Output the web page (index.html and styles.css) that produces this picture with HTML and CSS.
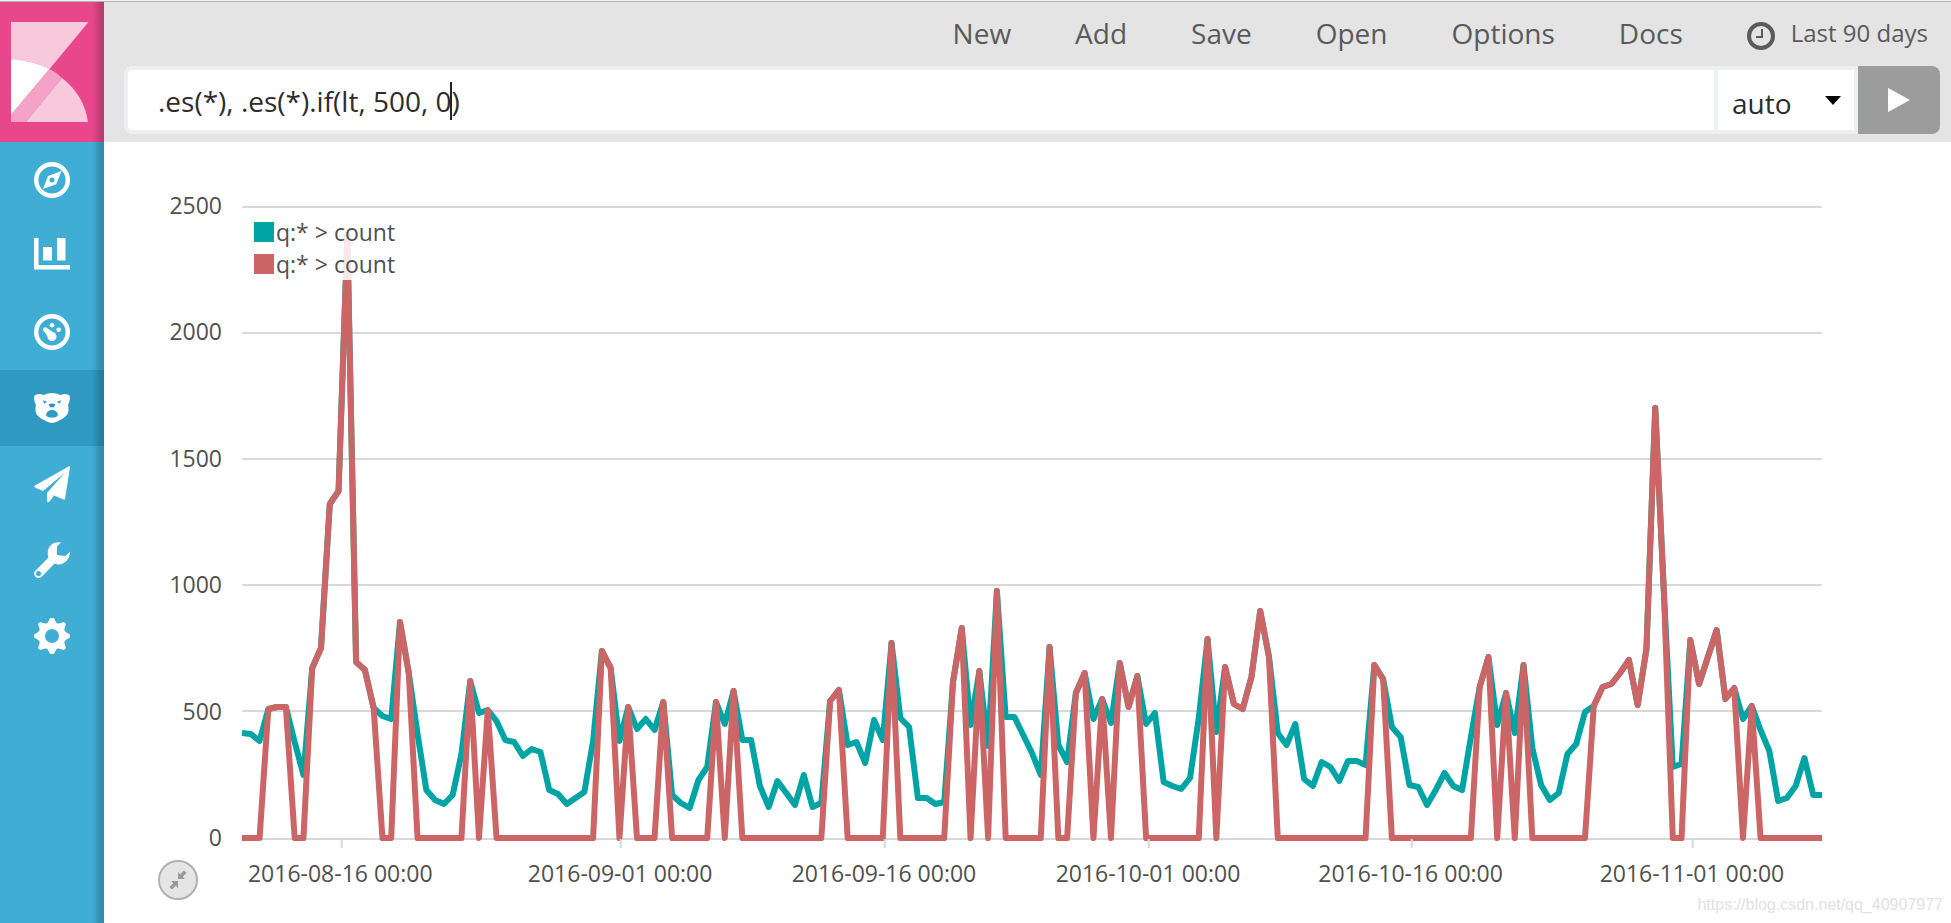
FILE: index.html
```html
<!DOCTYPE html>
<html lang="en">
<head>
<meta charset="utf-8">
<title>Timelion - Kibana</title>
<link rel="stylesheet" href="styles.css">
</head>
<body>
<div class="app">
  <nav class="sidebar" aria-label="Applications">
    <a class="logo" href="#" aria-label="Kibana">
      <svg viewBox="0 0 104 140" aria-hidden="true">
        <path fill="#f8c8dd" d="M11 20H88.500L49.500 67Q32 58 11 58Z"/>
        <path fill="#fff" d="M11 57.500Q32 58 49.500 67L11 113Z"/>
        <path fill="#f3a3c7" d="M49.500 67Q56 70 62 76L26 120H11V113Z"/>
        <path fill="#f8c8dd" d="M62 76Q84 93 88 120H26Z"/>
      </svg>
    </a>
    <a class="nav-item" href="#" aria-label="Discover">
      <svg viewBox="0 0 36 36" aria-hidden="true"><circle cx="18" cy="18" r="15.800" fill="none" stroke="#fff" stroke-width="4.400"/><path fill="#fff" fill-rule="evenodd" d="M27.500 9L22.300 22.300L9 27L14 14ZM18 15.500A2.500 2.500 0 1 0 18 20.500A2.500 2.500 0 1 0 18 15.500Z"/></svg>
    </a>
    <a class="nav-item" href="#" aria-label="Visualize">
      <svg viewBox="0 0 36 36" aria-hidden="true"><path fill="#fff" d="M0 0H4.500V27H36V31.500H0ZM9 9H18V22.500H9ZM23 0H31.500V22.500H23Z"/></svg>
    </a>
    <a class="nav-item" href="#" aria-label="Dashboard">
      <svg viewBox="0 0 36 36" aria-hidden="true"><circle cx="18" cy="18" r="15.800" fill="none" stroke="#fff" stroke-width="4.400"/><g fill="#fff"><circle cx="18" cy="11.300" r="2.300"/><circle cx="24.700" cy="15.700" r="2.300"/><circle cx="18" cy="22.500" r="4.500"/><path d="M9.300 16.500A2.200 2.200 0 0 1 12.700 13.800L21 19.500L15.500 25Z"/></g></svg>
    </a>
    <a class="nav-item active" href="#" aria-label="Timelion" aria-current="page">
      <svg viewBox="0 0 36 36" aria-hidden="true"><path fill="#fff" fill-rule="evenodd" d="M1 5Q5 3 9.500 5Q18 1 26.500 5Q31 3 35 5Q37 7 35 13L34 15Q36 22 32 26Q29 29 26 30Q22 33 18 33Q14 33 10 30Q7 29 4 26Q0 22 2 15L1 13Q-1 7 1 5ZM12 25Q13 20 18 20Q23 20 24 25Q24 26 22 27Q18 28 14 27Q12 26 12 25ZM14.500 14.500Q18 12.500 21.500 14.500Q21 17 18 17.500Q15 17 14.500 14.500ZM9 10L13 12Q12 13.500 10 13ZM27 10L23 12Q24 13.500 26 13Z"/></svg>
    </a>
    <a class="nav-item" href="#" aria-label="Canvas">
      <svg viewBox="0 0 36 36" aria-hidden="true"><path fill="#fff" d="M35 .3Q36 0 36 1L31 33Q30.700 34 29.500 33.500L20 29.500L15.500 35.500Q13 37 13 34.500V27L30.500 7L9 25L1 21.500Q-.8 20.500 1 19.500Z"/></svg>
    </a>
    <a class="nav-item" href="#" aria-label="Dev Tools">
      <svg viewBox="0 0 36 36" aria-hidden="true"><path fill="#fff" fill-rule="evenodd" d="M27 .5Q17 -1 14 8Q13 12 14.500 15.500L1.500 28.500Q-1 31 1 34.500Q4.500 37.500 8 34.500L20.500 21.500Q27 24 32 19.500Q36 15.500 36 9.500L31.500 14L23 13V4.500ZM4.500 29A2.500 2.500 0 1 0 4.500 34A2.500 2.500 0 1 0 4.500 29Z"/></svg>
    </a>
    <a class="nav-item" href="#" aria-label="Management">
      <svg viewBox="0 0 36 36" aria-hidden="true"><path fill="#fff" fill-rule="evenodd" d="M16 0H20Q22 5 23.500 5.500Q25 5.500 30 4L32 6Q30 11 30.500 12.500Q31 14 36 16.500V19.500Q31 22 30.500 23.500Q30 25 32 30L30 32Q25 30 23.500 30.500Q22 31 20 36H16Q14 31 12.500 30.500Q11 30 6 32L4 30Q6 25 5.500 23.500Q5 22 0 19.500V16.500Q5 14 5.500 12.500Q6 11 4 6L6 4Q11 5.500 12.500 5.500Q14 5 16 0ZM18 11A7 7 0 1 0 18 25A7 7 0 1 0 18 11Z"/></svg>
    </a>
  </nav>

  <div class="page">
    <header class="topbar">
      <div class="menu">
        <button type="button">New</button>
        <button type="button">Add</button>
        <button type="button">Save</button>
        <button type="button">Open</button>
        <button type="button">Options</button>
        <button type="button">Docs</button>
        <button type="button" class="time">
          <svg viewBox="0 0 28 28" aria-hidden="true"><circle cx="14" cy="14" r="12" fill="none" stroke="#5a5a5a" stroke-width="4"/><path d="M15 7V15H9" fill="none" stroke="#5a5a5a" stroke-width="2"/></svg>
          <span>Last 90 days</span>
        </button>
      </div>
      <form class="search">
        <div class="expression">
          <input type="text" value=".es(*), .es(*).if(lt, 500, 0)" aria-label="Timelion expression">
          <span class="caret"></span>
        </div>
        <div class="interval">
          <select aria-label="Interval"><option>auto</option></select>
        </div>
        <button type="button" class="run" aria-label="Run">
          <svg viewBox="0 0 22 24" aria-hidden="true"><path fill="#fff" d="M0 0L22 12L0 24Z"/></svg>
        </button>
      </form>
    </header>

    <main class="chart">
      <div class="y-axis">
        <span>2500</span><span>2000</span><span>1500</span><span>1000</span><span>500</span><span>0</span>
      </div>
      <div class="plot">
        <svg class="lines" viewBox="0 0 180 632" preserveAspectRatio="none" role="img" aria-label="Event count over the last 90 days">
          <path class="grid" d="M0 0H180M0 126H180M0 252H180M0 378H180M0 504H180M0 632H180"/>
          <polyline id="all" class="series all"/>
          <polyline id="filtered" class="series filtered"/>
        </svg>
        <div class="legend">
          <div class="legend-row"><i class="swatch teal"></i>q:* &gt; count</div>
          <div class="legend-row"><i class="swatch red"></i>q:* &gt; count</div>
        </div>
      </div>
      <button type="button" class="collapse" aria-label="Exit full screen">
        <svg viewBox="0 0 16 16" aria-hidden="true"><path fill="#999" d="M8 0L10.300 2.300L14 -1.500L16.500 1L12.700 4.700L15 7H8ZM8 16L5.700 13.700L2 17.500L-.5 15L3.300 11.300L1 9H8Z"/></svg>
      </button>
      <div class="x-axis">
        <span style="left:6.220%">2016-08-16 00:00</span>
        <span style="left:23.930%">2016-09-01 00:00</span>
        <span style="left:40.630%">2016-09-16 00:00</span>
        <span style="left:57.340%">2016-10-01 00:00</span>
        <span style="left:73.960%">2016-10-16 00:00</span>
        <span style="left:91.770%">2016-11-01 00:00</span>
      </div>
    </main>
    <footer class="watermark">https://blog.csdn.net/qq_40907977</footer>
  </div>
</div>
<script src="chart.js"></script>
</body>
</html>
```

FILE: styles.css
```css
* { box-sizing: border-box; }

body {
  margin: 0;
  font-family: "Open Sans", "Noto Sans", sans-serif;
  color: #505050;
  background: #fff;
}

button, input, select { font: inherit; color: inherit; }

button {
  padding: 0;
  border: 0;
  background: none;
}

.app {
  display: flex;
  min-height: 100vh;
  border-top: 1px solid #eef2f2;
}

.sidebar {
  flex: none;
  width: 104px;
  border-top: 1px solid #b0b4b4;
  background: linear-gradient(to left, rgba(0, 0, 0, 0.2), rgba(0, 0, 0, 0.17) 4px, transparent 12px), #3fadd4;
}

.logo {
  display: block;
  height: 140px;
  background: linear-gradient(to left, rgba(0, 0, 0, 0.2), rgba(0, 0, 0, 0.17) 4px, transparent 12px), #e8488b;
}

.logo svg { display: block; width: 104px; height: 140px; }

.nav-item {
  display: flex;
  align-items: center;
  justify-content: center;
  height: 76px;
}

.nav-item.active {
  background: linear-gradient(to left, rgba(0, 0, 0, 0.2), rgba(0, 0, 0, 0.17) 4px, transparent 12px), #2f99c2;
}

.nav-item svg { width: 36px; height: 36px; overflow: visible; }

.page {
  flex: 1;
  min-width: 0;
  display: flex;
  flex-direction: column;
}

.topbar {
  border-top: 1px solid #b0b4b4;
  padding: 0 11px 8px 20px;
  background: #e4e4e4;
}

.menu {
  display: flex;
  justify-content: flex-end;
  align-items: center;
  gap: 64px;
  height: 62px;
  margin-bottom: 2px;
  padding-right: 12px;
  font-size: 28px;
  color: #5a5a5a;
}

.time {
  display: flex;
  align-items: center;
  gap: 16px;
  font-size: 24px;
}

.time svg { width: 28px; height: 28px; margin-top: 6px; }
.time span { padding-bottom: 2px; }

.search {
  display: flex;
  height: 68px;
  font-size: 28px;
  color: #2d2d2d;
}

.expression {
  position: relative;
  flex: 1;
  border: 4px solid #ecf0f1;
  border-radius: 8px 0 0 8px;
  background: #fff;
}

.expression input {
  display: block;
  width: 100%;
  height: 100%;
  padding: 2px 30px 0;
  border: 0;
  outline: 0;
  background: transparent;
}

.caret {
  position: absolute;
  left: 322px;
  top: 12px;
  width: 2px;
  height: 38px;
  background: #222;
}

.interval {
  position: relative;
  width: 140px;
  border: 4px solid #ecf0f1;
  border-left: 0;
  background: #fff;
}

.interval select {
  display: block;
  width: 100%;
  height: 100%;
  padding: 6px 14px 0;
  border: 0;
  appearance: none;
  background: transparent;
}

.interval::after {
  content: "";
  position: absolute;
  right: 13px;
  top: 26px;
  border: 8px solid transparent;
  border-top: 9px solid #000;
  border-bottom: 0;
}

.run {
  display: flex;
  align-items: center;
  justify-content: center;
  width: 82px;
  border-radius: 0 8px 8px 0;
  background: #9c9c9c;
}

.run svg { width: 22px; height: 24px; }

.chart {
  flex: 1;
  display: grid;
  grid-template-columns: 64px 1fr;
  grid-template-rows: 1fr 60px;
  column-gap: 20px;
  padding: 65px 129px 0 54px;
  font-size: 23px;
  line-height: 32px;
}

.y-axis {
  display: flex;
  flex-direction: column;
  justify-content: space-between;
  margin: -18px 0 -14px;
  text-align: right;
}

.plot { position: relative; min-height: 0; }

.lines {
  position: absolute;
  inset: 0;
  width: 100%;
  height: 100%;
  overflow: visible;
}

.grid, .series { fill: none; vector-effect: non-scaling-stroke; }
.grid { stroke: #d8d8d8; stroke-width: 2px; }
.series { stroke-width: 6px; stroke-linejoin: round; }
.all { stroke: #01a4a4; }
.filtered { stroke: #c66; }

.legend {
  position: absolute;
  left: 12px;
  top: 9px;
  background: rgba(255, 255, 255, 0.85);
}

.legend-row {
  display: flex;
  align-items: center;
  gap: 2px;
  height: 32px;
}

.swatch { width: 20px; height: 20px; }
.teal { background: #01a4a4; }
.red { background: #c66; }

.collapse {
  align-self: start;
  display: grid;
  place-items: center;
  width: 40px;
  height: 40px;
  margin-top: 21px;
  border: 2px solid #b0b0b0;
  border-radius: 50%;
  background: #e5e5e5;
}

.collapse svg { width: 16px; height: 16px; overflow: visible; }

.x-axis { position: relative; }

.x-axis span {
  position: absolute;
  top: 0;
  padding-top: 18px;
  white-space: nowrap;
  transform: translateX(-50%);
}

.x-axis span::before {
  content: "";
  position: absolute;
  left: 50%;
  top: 0;
  width: 2px;
  height: 9px;
  background: #d8d8d8;
}

.watermark {
  height: 24px;
  padding-right: 8px;
  text-align: right;
  font: 16px/12px "Liberation Sans", Arial, sans-serif;
  color: #e2e2e2;
}
```

FILE: chart.js
```js
// Vertical plot position of each half-day bucket, measured down from TOP.
const TOP = 207;
const BASE = 838;
const THRESHOLD = 711.9;

const buckets = [
  733, 734, 741, 709, 707, 707, 742, 775, 668, 648, 504, 491, 235, 662, 670,
  708, 716, 719, 622, 673, 734, 790, 800, 804, 795, 754, 681, 713, 710, 721,
  740, 742, 756, 749, 752, 790, 794, 804, 798, 792, 741, 651, 668, 741, 707,
  729, 719, 730, 702, 795, 803, 808, 780, 767, 702, 724, 691, 740, 740, 786,
  807, 781, 793, 805, 775, 807, 803, 701, 690, 745, 742, 763, 720, 740, 643,
  718, 727, 798, 798, 804, 802, 682, 628, 725, 671, 746, 591, 717, 717, 735,
  753, 775, 647, 745, 762, 693, 673, 719, 699, 723, 663, 707, 676, 724, 713,
  782, 786, 789, 778, 718, 639, 732, 667, 704, 709, 677, 611, 657, 733, 745,
  724, 779, 786, 762, 767, 781, 761, 761, 765, 665, 679, 727, 737, 785, 787,
  805, 790, 773, 786, 790, 737, 687, 657, 725, 693, 733, 665, 748, 785, 800,
  793, 754, 744, 712, 706, 687, 684, 673, 660, 705, 649, 408, 595, 767, 764,
  640, 684, 657, 630, 699, 688, 719, 706, 730, 751, 801, 798, 786, 758, 795,
  795
];

const toPoints = (levels) =>
  levels.map((level, i) => `${i},${level - TOP}`).join(" ");

document.getElementById("all").setAttribute("points", toPoints(buckets));
document.getElementById("filtered").setAttribute(
  "points",
  toPoints(buckets.map((level) => (level > THRESHOLD ? BASE : level)))
);
```
